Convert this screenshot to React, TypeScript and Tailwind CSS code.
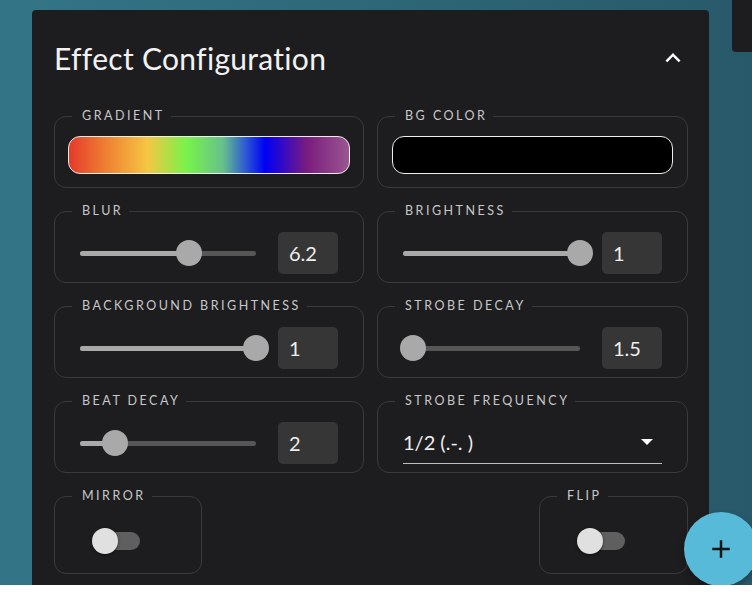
import React from 'react';

const font = { fontFamily: 'Lato, "Noto Sans", sans-serif' };

const Field: React.FC<{ label: string; className?: string; children: React.ReactNode }> = ({
  label,
  className = '',
  children
}) => (
  <fieldset className={`rounded-xl border border-[#3a3a3c] ${className}`}>
    <legend className="ml-[17px] pl-[10px] pr-[6px] text-[12.5px] leading-4 tracking-[0.2em] text-[#c8c8c8]">
      {label}
    </legend>
    {children}
  </fieldset>
);

const Slider: React.FC<{ pct: number }> = ({ pct }) => (
  <div className="relative h-[26px] flex-1">
    <div className="absolute left-0 right-0 top-[10.5px] h-[5px] rounded-full bg-[#565656]" />
    <div
      className="absolute left-0 top-[10.5px] h-[5px] rounded-full bg-[#a9a9a9]"
      style={{ width: `${pct}%` }}
    />
    <div
      className="absolute top-0 h-[26px] w-[26px] -translate-x-1/2 rounded-full bg-[#a9a9a9]"
      style={{ left: `${pct}%` }}
    />
  </div>
);

const SliderField: React.FC<{ label: string; pct: number; value: string }> = ({ label, pct, value }) => (
  <Field label={label}>
    <div className="flex items-center gap-[22px] pl-[25px] pr-[25px] pt-[13px] pb-[8px]">
      <Slider pct={pct} />
      <div className="flex h-[42px] w-[60px] items-center rounded-[5px] bg-[#363636] pl-[11px] text-[20px] text-[#eeeeee]">
        {value}
      </div>
    </div>
  </Field>
);

const Toggle = () => (
  <div className="relative h-[26px] w-[48px]">
    <div className="absolute left-[11px] right-0 top-[4px] h-[18px] rounded-full bg-[#5f5f5f]" />
    <div className="absolute left-0 top-0 h-[26px] w-[26px] rounded-full bg-[#e0e0e0] shadow-[0_1px_3px_rgba(0,0,0,0.5)]" />
  </div>
);

export default function App() {
  return (
    <div
      className="relative flex h-[585px] items-start overflow-hidden bg-gradient-to-r from-[#337587] to-[#28596a]"
      style={font}
    >
      <div className="ml-[32px] mt-[10px] h-[600px] w-[677px] rounded-[4px] bg-[#1d1d1f] pl-[22px] pr-[21px]">
        <div className="mt-[30px] mb-[32px] flex h-[36px] items-center justify-between">
          <h1 className="text-[30px] leading-9 tracking-[0.01em] text-[#f2f2f2]">Effect Configuration</h1>
          <svg width="30" height="30" viewBox="0 0 24 24" fill="#ffffff">
            <path d="M12 8l-6 6 1.41 1.41L12 10.83l4.59 4.58L18 14z" />
          </svg>
        </div>

        <div className="grid grid-cols-[310px_311px] gap-x-[13px] gap-y-[15px]">
          <Field label="GRADIENT">
            <div className="px-[13px] pt-[12px] pb-[13px]">
              <div className="h-[38px] rounded-xl border border-[#eeeeee] bg-[linear-gradient(90deg,#e53a2a_0%,#ee7a31_12%,#f5c643_28%,#78f34a_42%,#67c08c_55%,#2d5bd2_63%,#0000f5_70%,#3a0bc0_77%,#7a1c7e_85%,#9a5690_100%)]" />
            </div>
          </Field>
          <Field label="BG COLOR">
            <div className="px-[14px] pt-[12px] pb-[13px]">
              <div className="h-[38px] rounded-xl border border-[#eeeeee] bg-black" />
            </div>
          </Field>

          <SliderField label="BLUR" pct={62} value="6.2" />
          <SliderField label="BRIGHTNESS" pct={100} value="1" />

          <SliderField label="BACKGROUND BRIGHTNESS" pct={100} value="1" />
          <SliderField label="STROBE DECAY" pct={5.6} value="1.5" />

          <SliderField label="BEAT DECAY" pct={20} value="2" />
          <Field label="STROBE FREQUENCY">
            <div className="px-[25px] pb-[8px]">
              <div className="flex items-center justify-between border-b border-[#bdbdbd] pt-[19px] pb-[7px] pr-[9px]">
                <span className="text-[20px] leading-7 text-[#eeeeee]">1/2 (.-. )</span>
                <svg width="12" height="6" viewBox="0 0 12 6">
                  <path d="M0 0h12L6 6z" fill="#ffffff" />
                </svg>
              </div>
            </div>
          </Field>

          <Field label="MIRROR" className="w-[148px]">
            <div className="pl-[37px] pt-[24px] pb-[19px]">
              <Toggle />
            </div>
          </Field>
          <Field label="FLIP" className="w-[149px] justify-self-end">
            <div className="pl-[37px] pt-[24px] pb-[19px]">
              <Toggle />
            </div>
          </Field>
        </div>
      </div>

      <div className="ml-[23px] h-[52px] w-[20px] rounded-bl-[4px] bg-[#1d1d1f]" />

      <button className="absolute right-[-6px] top-[512px] flex h-[74px] w-[74px] items-center justify-center rounded-full bg-[#57bad9] shadow-[0_3px_6px_rgba(0,0,0,0.3)]">
        <svg width="30" height="30" viewBox="0 0 24 24" fill="#151515">
          <path d="M19 13h-6v6h-2v-6H5v-2h6V5h2v6h6v2z" />
        </svg>
      </button>
    </div>
  );
}
